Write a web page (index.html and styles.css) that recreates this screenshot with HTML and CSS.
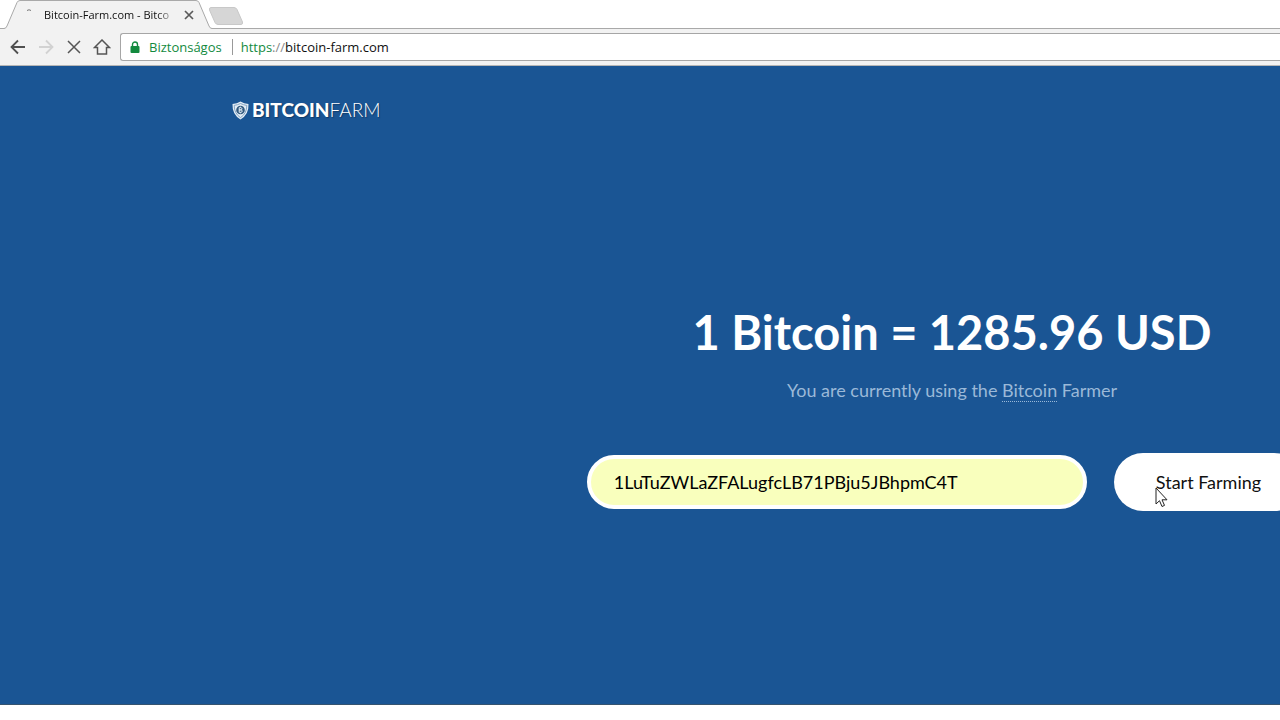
FILE: index.html
```
<!DOCTYPE html>
<html lang="en">
<head>
	<meta charset="utf-8">
	<meta name="viewport" content="width=device-width, initial-scale=1">
	<title>Bitcoin-Farm.com - Bitcoin Farmer</title>
	<link rel="stylesheet" href="styles.css">
</head>
<body>

	<header class="browser">
		<div class="tabs">
			<div class="tab">
				<svg class="tab-shape" width="208" height="29" viewBox="0 0 208 29">
					<path d="M0 29V28.500Q2 28.500 3 26L13 2.500Q14 .5 16 .5H192Q194 .5 195 2.500L205 26Q206 28.500 208 28.500V29Z" fill="#f2f2f2"/>
					<path d="M0 28.500Q2 28.500 3 26L13 2.500Q14 .5 16 .5H192Q194 .5 195 2.500L205 26Q206 28.500 208 28.500" fill="none" stroke="#a9a9a9"/>
				</svg>
				<svg class="spinner" width="16" height="16" viewBox="0 0 16 16"><path d="M6 3.500Q8 2 10 3.500" fill="none" stroke="#777"/></svg>
				<span class="tab-title">Bitcoin-Farm.com - Bitco</span>
				<button class="tab-close" aria-label="Close tab">
					<svg width="10" height="10" viewBox="0 0 10 10"><path d="M1 1L9 9M9 1L1 9" stroke="#5a5a5a" stroke-width="1.700"/></svg>
				</button>
			</div>
			<button class="new-tab" aria-label="New tab">
				<svg width="36" height="18" viewBox="0 0 36 18"><path d="M3 .5H26Q28 .5 29 2.500L34.500 15Q35 17.500 33 17.500H10Q8 17.500 7 15.500L1.500 3Q1 .5 3 .5Z" fill="#d6d6d6" stroke="#c8c8c8"/></svg>
			</button>
		</div>
		<nav class="toolbar">
			<button class="tool" aria-label="Back">
				<svg width="16" height="16" viewBox="0 0 16 16"><path d="M15 8H2M8 1.500L1.500 8L8 14.500" fill="none" stroke="#505050" stroke-width="1.800"/></svg>
			</button>
			<button class="tool" aria-label="Forward">
				<svg width="16" height="16" viewBox="0 0 16 16"><path d="M1 8H14M8 1.500L14.500 8L8 14.500" fill="none" stroke="#d2d2d2" stroke-width="1.800"/></svg>
			</button>
			<button class="tool" aria-label="Stop">
				<svg width="16" height="16" viewBox="0 0 16 16"><path d="M2 2L14 14M14 2L2 14" stroke="#555" stroke-width="1.500"/></svg>
			</button>
			<button class="tool" aria-label="Home">
				<svg width="18" height="16" viewBox="0 0 18 16"><path d="M1.500 8.500L9 1L16.500 8.500H13.500V15H4.500V8.500Z" fill="none" stroke="#555" stroke-width="1.500"/></svg>
			</button>
			<div class="address">
				<svg class="lock" width="10" height="12" viewBox="0 0 10 12"><path d="M2.500 6V3.500A2.500 2.500 0 0 1 7.500 3.500V6" fill="none" stroke="#128a3e" stroke-width="1.400"/><rect x="0.500" y="5" width="9" height="7" rx="1" fill="#128a3e"/></svg>
				<span class="secure">Biztonságos</span>
				<span class="url"><span class="scheme">https</span><span class="slashes">://</span>bitcoin-farm.com</span>
			</div>
		</nav>
	</header>

	<main class="page">
		<div class="page-inner">
			<a class="logo" href="#">
				<svg width="17" height="19" viewBox="0 0 17 19">
					<path d="M8.500 .5Q12 2.500 16.500 3Q17 13.500 8.500 18.500Q0 13.500 .5 3Q5 2.500 8.500 .5Z" fill="#e4edf5"/>
					<path d="M8.500 2.500Q11.500 4 14.800 4.400Q14.800 12.500 8.500 16.600Q2.200 12.500 2.200 4.400Q5.500 4 8.500 2.500Z" fill="none" stroke="#6f93b8" stroke-width=".8"/>
					<circle cx="8.500" cy="9" r="4.300" fill="#31597f"/>
					<path d="M7.200 6.700H8.800Q10 6.700 10 7.800Q10 8.900 8.800 8.900H7.200H9Q10.200 8.900 10.200 10.100Q10.200 11.300 9 11.300H7.200ZM8.500 5.700V6.700M8.500 11.300V12.300" fill="none" stroke="#e4edf5"/>
				</svg>
				<span><b>BITCOIN</b>FARM</span>
			</a>
			<section class="hero">
				<h1>1 Bitcoin = 1285.96 USD</h1>
				<p>You are currently using the <a href="#">Bitcoin</a> Farmer</p>
				<form class="farm-form">
					<input type="text" aria-label="Bitcoin address" value="1LuTuZWLaZFALugfcLB71PBju5JBhpmC4T">
					<div class="start">
						<button type="button">Start Farming</button>
						<svg class="cursor" width="13" height="21" viewBox="0 0 13 21"><path d="M1 1V17L4.500 13.700L7 19.500L9.500 18.400L7 12.800H12Z" fill="#fff" stroke="#222"/></svg>
					</div>
				</form>
			</section>
		</div>
	</main>

</body>
</html>
```
FILE: styles.css
```
*{
    margin: 0;
    padding: 0;
    box-sizing: border-box;
}
body{
    display: flex;
    flex-direction: column;
    min-height: 100vh;
    background: #fff;
    overflow: hidden;
    font-family: Lato, sans-serif;
}
button{
    border: none;
    background: none;
    font-family: inherit;
}
svg{
    display: block;
}

/* browser bar */
.browser{
    font-family: "Open Sans", sans-serif;
}
.tabs{
    display: flex;
    height: 29px;
    padding-left: 4px;
    background: linear-gradient(#a9a9a9, #a9a9a9) bottom / 100% 1px no-repeat #fff;
}
.tab{
    position: relative;
    display: flex;
    align-items: center;
    width: 208px;
    padding-left: 17px;
}
.tab-shape{
    position: absolute;
    top: 0;
    left: 0;
}
.spinner, .tab-title, .tab-close{
    position: relative;
}
.tab-title{
    width: 133px;
    margin-left: 7px;
    white-space: nowrap;
    font-size: 11px;
    color: #111;
    -webkit-mask-image: linear-gradient(to right, #000 85%, transparent);
    mask-image: linear-gradient(to right, #000 85%, transparent);
}
.tab-close{
    margin-left: 7px;
}
.new-tab{
    align-self: flex-start;
    margin-top: 7px;
    margin-left: -4px;
}
.toolbar{
    display: flex;
    align-items: center;
    height: 37px;
    padding-left: 4px;
    background: #f2f2f2;
    border-bottom: 1px solid #b6b6b6;
}
.tool{
    display: flex;
    justify-content: center;
    width: 28px;
}
.address{
    display: flex;
    flex: 1;
    align-items: center;
    height: 28px;
    margin-left: 4px;
    padding-left: 9px;
    background: #fff;
    border: 1px solid #a6a6a6;
    border-right: none;
    border-radius: 3px 0 0 3px;
    font-size: 13px;
}
.secure{
    margin-left: 9px;
    padding-right: 10px;
    border-right: 1px solid #999;
    line-height: 16px;
    color: #128a3e;
}
.url{
    margin-left: 8px;
    color: #111;
}
.scheme{
    color: #128a3e;
}
.slashes{
    color: #888;
}

/* site, wider than the window */
.page{
    flex: 1;
    margin-bottom: 15px;
    background: #1a5594;
    border-bottom: 1px solid #35536f;
    overflow: hidden;
}
.page-inner{
    width: calc(100% + 624px);
    padding-top: 31px;
}
.logo{
    display: inline-flex;
    align-items: center;
    margin-left: 232px;
    color: #fff;
    text-decoration: none;
    font-size: 19px;
    font-weight: 300;
    line-height: 26px;
    text-shadow: 1px 1px 1px #123b68;
}
.logo span{
    margin-left: 3px;
}
.logo b{
    font-weight: 900;
}
.hero{
    padding-top: 173px;
    text-align: center;
}
.hero h1{
    color: #fff;
    font-size: 47px;
    line-height: 72px;
}
.hero p{
    margin-top: 8px;
    color: #9bb9d8;
    font-size: 18px;
    line-height: 28px;
}
.hero p a{
    color: inherit;
    text-decoration: none;
    border-bottom: 1px dotted #9bb9d8;
}
.farm-form{
    display: flex;
    justify-content: center;
    align-items: center;
    gap: 27px;
    margin-top: 49px;
}
.farm-form input{
    width: 500px;
    height: 54px;
    padding: 0 23px;
    border: 4px solid #fff;
    border-radius: 27px;
    background: #f9ffbd;
    color: #000;
    font-family: Lato, sans-serif;
    font-size: 18px;
}
.start{
    position: relative;
    margin-right: 14px;
}
.start button{
    height: 58px;
    padding: 0 42px;
    border-radius: 29px;
    background: #fff;
    color: #111;
    font-size: 18px;
    cursor: pointer;
}
.cursor{
    position: absolute;
    top: 34px;
    left: 41px;
}
```
